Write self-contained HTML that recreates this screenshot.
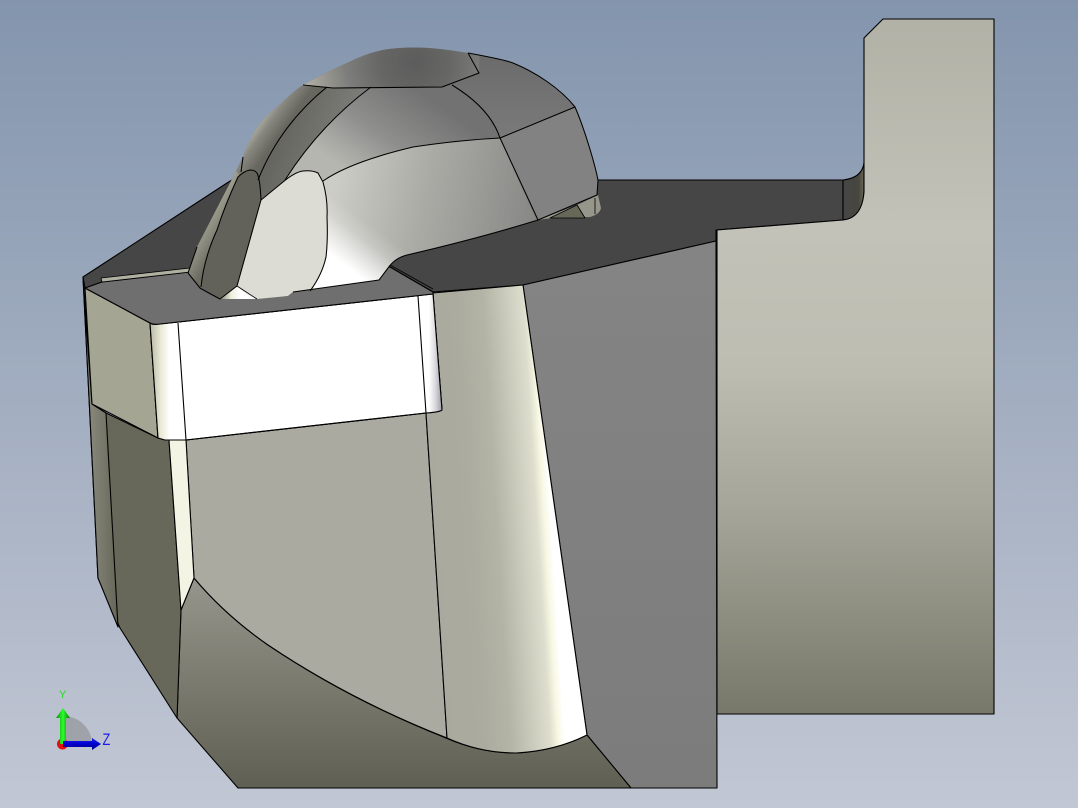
<!DOCTYPE html>
<html><head><meta charset="utf-8"><style>
html,body{margin:0;padding:0;width:1078px;height:808px;overflow:hidden;background:#a0abbe}
svg{display:block}
</style></head><body>
<svg width="1078" height="808" viewBox="0 0 1078 808" xmlns="http://www.w3.org/2000/svg">
<defs>
<linearGradient id="bg" x1="0" y1="0" x2="0" y2="1"><stop offset="0" stop-color="#8395ad"/><stop offset="1" stop-color="#c2c7d4"/></linearGradient>
<linearGradient id="blk" gradientUnits="userSpaceOnUse" x1="0" y1="19" x2="0" y2="714"><stop offset="0" stop-color="#b1b1a6"/><stop offset=".3" stop-color="#c2c2b8"/><stop offset=".5" stop-color="#bdbdb2"/><stop offset=".72" stop-color="#a3a397"/><stop offset="1" stop-color="#77776a"/></linearGradient>
<linearGradient id="fil" x1="0" y1="0" x2="1" y2="0"><stop offset="0" stop-color="#454545"/><stop offset=".75" stop-color="#47473f"/><stop offset="1" stop-color="#6a6a5a"/></linearGradient>
<linearGradient id="cyl" gradientUnits="userSpaceOnUse" x1="430" y1="500" x2="560" y2="492"><stop offset="0" stop-color="#a9a99f"/><stop offset=".3" stop-color="#abab9f"/><stop offset=".5" stop-color="#b3b3a6"/><stop offset=".81" stop-color="#dedece"/><stop offset=".87" stop-color="#f8f8e4"/><stop offset=".92" stop-color="#fff"/><stop offset="1" stop-color="#fff"/></linearGradient>
<linearGradient id="bot" gradientUnits="userSpaceOnUse" x1="0" y1="580" x2="0" y2="788"><stop offset="0" stop-color="#95958b"/><stop offset=".5" stop-color="#7a7a6f"/><stop offset="1" stop-color="#5f5f53"/></linearGradient>
<linearGradient id="gry" gradientUnits="userSpaceOnUse" x1="0" y1="250" x2="0" y2="788"><stop offset="0" stop-color="#848484"/><stop offset="1" stop-color="#7c7c7c"/></linearGradient>
<linearGradient id="lft" x1="0" y1="0" x2="1" y2="0"><stop offset="0" stop-color="#8f8f84"/><stop offset="1" stop-color="#666658"/></linearGradient>
<linearGradient id="fl1" x1="0" y1="0" x2="1" y2="0"><stop offset="0" stop-color="#b7b7a5"/><stop offset=".3" stop-color="#e9e9d6"/><stop offset=".55" stop-color="#fff"/><stop offset="1" stop-color="#fff"/></linearGradient>
<linearGradient id="fl2" x1="0" y1="0" x2="1" y2="0"><stop offset="0" stop-color="#fff"/><stop offset=".45" stop-color="#fff"/><stop offset=".7" stop-color="#dcdce0"/><stop offset="1" stop-color="#9fa0a8"/></linearGradient>
<radialGradient id="cap" gradientUnits="userSpaceOnUse" cx="415" cy="62" r="115"><stop offset="0" stop-color="#5c5c5c"/><stop offset=".3" stop-color="#666665"/><stop offset=".6" stop-color="#7d7d7b"/><stop offset="1" stop-color="#b4b4a8"/></radialGradient>
<linearGradient id="tr" gradientUnits="userSpaceOnUse" x1="0" y1="60" x2="0" y2="200"><stop offset="0" stop-color="#6c6c6c"/><stop offset="1" stop-color="#858585"/></linearGradient>
<linearGradient id="mid" gradientUnits="userSpaceOnUse" x1="410" y1="85" x2="350" y2="172"><stop offset="0" stop-color="#727272"/><stop offset=".55" stop-color="#8f8f8e"/><stop offset="1" stop-color="#b6b6b0"/></linearGradient>
<linearGradient id="main" gradientUnits="userSpaceOnUse" x1="335" y1="175" x2="540" y2="215"><stop offset="0" stop-color="#cdcdc7"/><stop offset=".45" stop-color="#aaaaa5"/><stop offset="1" stop-color="#868684"/></linearGradient>
<linearGradient id="glow" gradientUnits="userSpaceOnUse" x1="322" y1="292" x2="372" y2="225"><stop offset="0" stop-color="#fff"/><stop offset=".42" stop-color="#fff"/><stop offset=".8" stop-color="#fff" stop-opacity=".2"/><stop offset="1" stop-color="#fff" stop-opacity="0"/></linearGradient>
<linearGradient id="lp" gradientUnits="userSpaceOnUse" x1="258" y1="120" x2="300" y2="150"><stop offset="0" stop-color="#b4b4a8"/><stop offset=".22" stop-color="#87877f"/><stop offset=".5" stop-color="#676760"/><stop offset="1" stop-color="#666660"/></linearGradient>
<linearGradient id="strip" gradientUnits="userSpaceOnUse" x1="280" y1="120" x2="345" y2="145"><stop offset="0" stop-color="#64645e"/><stop offset="1" stop-color="#7d7d79"/></linearGradient>
<linearGradient id="lw" gradientUnits="userSpaceOnUse" x1="195" y1="232" x2="218" y2="246"><stop offset="0" stop-color="#a8a898"/><stop offset="1" stop-color="#6c6c62"/></linearGradient>
<linearGradient id="wht" gradientUnits="userSpaceOnUse" x1="220" y1="0" x2="240" y2="0"><stop offset="0" stop-color="#85857a"/><stop offset=".55" stop-color="#eeeedd"/><stop offset="1" stop-color="#fff"/></linearGradient>
<linearGradient id="grn" x1="0" y1="0" x2="1" y2="0"><stop offset="0" stop-color="#0a8a0a"/><stop offset=".5" stop-color="#2bff2b"/><stop offset="1" stop-color="#067a06"/></linearGradient>
<linearGradient id="blu" x1="0" y1="0" x2="0" y2="1"><stop offset="0" stop-color="#2222ee"/><stop offset=".5" stop-color="#0000cc"/><stop offset="1" stop-color="#000088"/></linearGradient>
<clipPath id="dome"><path d="M188 273L197 247L230 183L243 157C250 135 262 118 277 107C288 97 295 90 303 85C320 76 335 68 347 63C365 54 380 49 400 48C425 46 450 50 468 53C490 57 505 60 513 63C535 72 560 88 575 107C585 130 595 165 598 180L597 195L538 220Q480 238 407 255Q395 258 388 268L379 280L293 292L288 296L257 299L220 299L207 292L200 288Z"/></clipPath>
</defs>

<rect width="1078" height="808" fill="url(#bg)"/>

<g stroke="#000" stroke-width="1.1" stroke-linejoin="round">
<!-- dark platform -->
<path d="M83 277L227 183L232 180L600 180L843 180L843 220L716 230L716 241L523 285L433 292L390 267L190 272L102 282L85 288Z" fill="#464646"/>
<path d="M843 180Q862 178 864 163L864 192Q863 218 843 220Z" fill="url(#fil)"/>

<!-- right block -->
<path d="M864 38L883 19L994 19L994 714L717 714L717 230L843 220Q862 218 864 192Z" fill="url(#blk)"/>
<!-- right grey face -->
<path d="M523 285L716 241L717 788L631 788L587 735Z" fill="url(#gry)"/>
<!-- bottom dark face -->
<path d="M194 578Q225 615 268 645Q350 700 446 738Q480 753 516 753Q555 751 587 735L631 788L238 788L177 718L181 610Z" fill="url(#bot)"/>
<!-- front beige -->
<path d="M186 440L426 413L447 738Q350 700 268 645Q225 615 194 578Z" fill="#aaaaa0"/>
<!-- cylinder -->
<path d="M433 293L523 285L587 735Q555 751 516 753Q480 753 447 738L426 413L442 410Z" fill="url(#cyl)"/>
<!-- left dark faces -->
<path d="M83 277L92 404L106 413L158 438L169 440L181 610L177 718L120 628L98 578Z" fill="#68685a"/>
<path d="M83 277L92 404L106 413L118 627L98 578Z" fill="url(#lft)"/>
<!-- cream strip -->
<path d="M169 440L186 440L194 578L181 610Z" fill="#f3f4e4"/>
<!-- block left -->
<path d="M85 288L150 323L158 438L92 404Z" fill="#a5a594"/>
<!-- white front -->
<path d="M150 323Q153 325 160 324L433 294L442 410Q440 412 426 413L186 440L165 440L158 438Z" fill="#fff"/>
<path d="M150 323Q153 325 160 324L178 323L186 440L165 440L158 438Z" fill="url(#fl1)" stroke="none"/>
<path d="M418 296L433 294L442 410Q440 412 426 413Z" fill="url(#fl2)" stroke="none"/>
<path d="M150 323Q153 325 160 324L433 294L442 410Q440 412 426 413L186 440L165 440L158 438Z" fill="none"/>
<path d="M178 323L186 440M418 296L426 413" fill="none"/>
<!-- top face -->
<path d="M85 288L102 282L190 272L390 267L433 292L433 294L160 324Q153 325 150 323Z" fill="#6f6f6f"/>
<path d="M102 282L190 272L190 268L101 278Z" fill="#b0b0a0" stroke-width=".8"/>
<path d="M390 265L433 289" fill="none" stroke-width=".8"/>

<!-- small bits right of dome -->
<path d="M538 220L577 205L598 195L601 208Q600 214 590 217L552 218Z" fill="#96968a" stroke="none"/>
<path d="M550 218L577 205L585 218Z" fill="#686858" stroke-width=".7"/>
<path d="M577 205L585 218M595 198L595 214" fill="none" stroke-width=".8"/>
</g>

<!-- dome panels, clipped -->
<g clip-path="url(#dome)">
<rect x="180" y="40" width="430" height="270" fill="#777"/>
<path d="M320 180Q350 162 413 147Q460 140 500 138L545 225L400 270L370 290L300 300L325 250Z" fill="url(#main)"/>
<path d="M320 180Q350 162 413 147Q460 140 500 138L545 225L400 270L370 290L300 300L325 250Z" fill="url(#glow)"/>
<path d="M575 100L605 180L600 200L538 225L500 138Z" fill="#828282"/>
<path d="M468 45L600 45L580 105L500 138Q490 108 452 85L442 87L479 73Z" fill="url(#tr)"/>
<path d="M371 87L442 87L452 85Q490 108 500 138Q460 140 413 147Q350 162 323 181L318 173Q312 170 303 171Q295 172 285 180Q320 125 371 87Z" fill="url(#mid)"/>
<path d="M240 100L300 80L327 87Q280 125 260 180L257 173Q255 170 251 170Q245 172 238 178L235 165Z" fill="url(#lp)"/>
<path d="M327 87L371 87Q320 125 285 180L260 200L260 180Q280 125 327 87Z" fill="url(#strip)"/>
<path d="M295 85L330 40L480 40L479 73L442 87L333 88Z" fill="url(#cap)"/>
<path d="M180 285L190 240L235 170L242 178L238 177Q225 205 217 230Q204 258 201 288L215 300L190 300Z" fill="url(#lw)"/>
<path d="M237 286L261 200Q260 178 257 173Q255 170 250 170Q244 171 238 177Q225 205 217 230Q204 258 201 287L207 292L220 300Z" fill="#62625a"/>
<path d="M237 286L219 300L258 300Z" fill="url(#wht)"/>
<path d="M261 200L283 182Q295 172 303 171Q312 170 318 173L323 182Q328 200 327 217Q328 240 326 257Q322 275 310 291L293 292L288 296L257 300Q245 294 237 286Z" fill="#dcdcd4"/>
</g>

<!-- dome edges -->
<g fill="none" stroke="#000" stroke-width="1.05" stroke-linejoin="round">
<path d="M468 53C490 57 505 60 513 63C535 72 560 88 575 107C585 130 595 165 598 180L597 195L538 220Q480 238 407 255Q395 258 388 268L379 280L293 292"/>
<path d="M303 85L333 88L442 87L479 73L468 53"/>
<path d="M327 87Q280 125 258 180"/>
<path d="M371 87Q320 125 285 180"/>
<path d="M452 85Q490 108 500 138"/>
<path d="M500 138L575 107"/>
<path d="M323 181Q350 162 413 147Q460 140 500 138"/>
<path d="M500 138L538 220"/>
<path d="M243 157L241 172"/>
<path d="M237 286L261 200Q260 178 257 173Q255 170 250 170Q244 171 238 177Q225 205 217 230Q204 258 201 287"/>
<path d="M188 273L197 247"/>
<path d="M188 273L200 288L207 292L220 299L237 286"/>
<path d="M261 200L283 182Q295 172 303 171Q312 170 318 173L323 182Q328 200 327 217Q328 240 326 257Q322 275 310 291"/>
<path d="M237 286L257 299" stroke-width=".8"/>
</g>

<!-- triad -->
<path d="M63 744L63 716A29 28 0 0 1 92 744Z" fill="#a0a2a9"/>
<circle cx="62.500" cy="744" r="5.500" fill="#e01010"/>
<path d="M60 744L60 718L56 718L63 708L70 718L66 718L66 744Z" fill="url(#grn)"/>
<path d="M63 741L92 741L92 738L101 744L92 750L92 747L63 747Z" fill="url(#blu)"/>
<text x="59" y="698" font-family="'Liberation Sans',sans-serif" font-size="11" fill="#22dd22">Y</text>
<text transform="translate(102.500 745) scale(.75 1)" font-family="'Liberation Sans',sans-serif" font-size="17" fill="#1a1aee">Z</text>
</svg>
</body></html>
